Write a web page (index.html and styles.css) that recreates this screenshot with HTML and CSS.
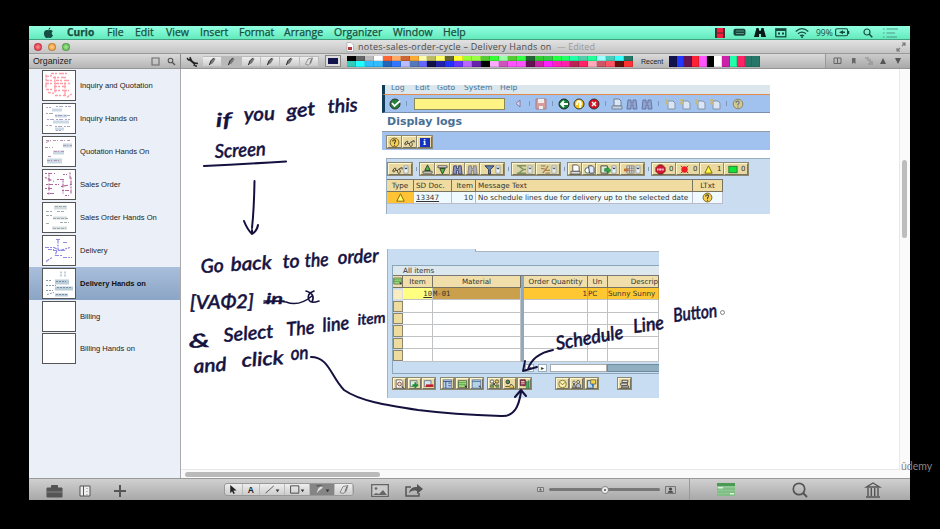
FILE: index.html
```html
<!DOCTYPE html>
<html lang="en">
<head>
<meta charset="utf-8">
<title>notes-sales-order-cycle</title>
<link rel="stylesheet" href="styles.css">
</head>
<body>
<svg class="defs" width="0" height="0">
  <symbol id="pen" viewBox="0 0 12 10"><path d="M3 9l1-4 4-4 2 1-3 5z" fill="#777"/><path d="M3 9l2-5 3-3" stroke="#222" fill="none"/></symbol>
  <symbol id="eraser" viewBox="0 0 12 10"><path d="M2 8l3-6 5-1-2 6-3 2z" fill="#ddd" stroke="#777" stroke-width=".8"/><path d="M7 7l2-5" stroke="#666"/></symbol>
  <symbol id="glasses" viewBox="0 0 12 12"><path d="M1 7c3-5 4-2 2 1-2 2-3-1-1-2M6 8c0-3 3-3 3 0s-3 3-3 0M4 7h2M8 5l3-1v2" fill="none" stroke="#333"/></symbol>
  <symbol id="help" viewBox="0 0 12 12"><circle cx="6" cy="6" r="4.8" fill="#f6d050" stroke="#755b1c"/><path d="M4 5c0-3 4-2 3 0L6 6.5v1M6 8.5v1" fill="none" stroke="#443" stroke-width="1.2"/></symbol>
  <symbol id="check" viewBox="0 0 12 12"><circle cx="6" cy="6" r="5" fill="#238138" stroke="#333"/><path d="M3 5l2.5 3L11 3" stroke="#fff" stroke-width="1.8" fill="none"/></symbol>
  <symbol id="back" viewBox="0 0 12 12"><circle cx="6" cy="6" r="5" fill="#168038" stroke="#222"/><path d="M10 6H4M6 3L3 6l3 3" stroke="#fff" stroke-width="1.8" fill="none"/></symbol>
  <symbol id="exit" viewBox="0 0 12 12"><circle cx="6" cy="6" r="5" fill="#f1c51a" stroke="#333"/><path d="M4 7c0-5 4-5 4 0M7 5v5" stroke="#fff" stroke-width="1.8" fill="none"/></symbol>
  <symbol id="cancel" viewBox="0 0 12 12"><circle cx="6" cy="6" r="5" fill="#d51320" stroke="#333"/><path d="M4 4l4 4M8 4L4 8" stroke="#fff" stroke-width="1.5"/></symbol>
  <symbol id="save" viewBox="0 0 12 12"><path d="M1 1h10v10H1z" fill="#d99a98" stroke="#a2808a"/><path d="M3 1h6v4H3zM4 8h4v3H4z" fill="#eee"/></symbol>
  <symbol id="print" viewBox="0 0 12 12"><path d="M3 1h5l2 2v5H3z" fill="#fff" stroke="#555"/><path d="M1 8h10v3H1z" fill="#ddd" stroke="#444" stroke-width=".8"/></symbol>
  <symbol id="find" viewBox="0 0 12 12"><path d="M2 2h3v3h2V2h3l1 9H7V7H5v4H1z" fill="#8790be" stroke="#353b64" stroke-width=".9"/></symbol>
  <symbol id="page" viewBox="0 0 12 12"><path d="M4 3h5l2 2v6H4z" fill="#fff" stroke="#777"/><path d="M1 2h3M1 5h3M3 1v6" stroke="#e0b72c" stroke-width="1.7"/></symbol>
  <symbol id="up" viewBox="0 0 12 12"><path d="M6 1l3 6H3z" fill="#4db84e" stroke="#263b27"/><path d="M1 8h10v2H1z" fill="#eee" stroke="#333" stroke-width=".8"/></symbol>
  <symbol id="down" viewBox="0 0 12 12"><path d="M3 5h6l-3 6z" fill="#4db84e" stroke="#263b27"/><path d="M1 2h10v2H1z" fill="#eee" stroke="#333" stroke-width=".8"/></symbol>
  <symbol id="filter" viewBox="0 0 12 12"><path d="M1 2h10L7 6v5H5V6z" fill="#6685b7" stroke="#253350"/></symbol>
  <symbol id="menu" viewBox="0 0 6 12"><path d="M.7 2h4.6v8H.7z" fill="#edf1f8" stroke="#8795a5" stroke-width=".8"/><path d="M1 4h4L3 6z" fill="#234"/></symbol>
  <symbol id="sum" viewBox="0 0 12 12"><path d="M1 2h10M1 10h10M3 2l5 4-5 4M8 6h3" stroke="#5f8148" stroke-width="1.6" fill="none"/></symbol>
  <symbol id="percent" viewBox="0 0 12 12"><path d="M1 2h5M1 5h4M6 7h5M6 10h5M9 2L3 10" stroke="#a06a30" stroke-width="1.5" fill="none"/></symbol>
  <symbol id="docs" viewBox="0 0 12 12"><circle cx="4" cy="7" r="3" fill="#fff" stroke="#367"/><path d="M5 2h4l2 2v6H6z" fill="#dfe9ff" stroke="#345"/></symbol>
  <symbol id="export" viewBox="0 0 12 12"><path d="M1 2h7v8H1z" fill="#d9edcf" stroke="#444"/><path d="M5 5h3V3l4 4-4 4V8H5z" fill="#31a445" stroke="#264" stroke-width=".6"/></symbol>
  <symbol id="config" viewBox="0 0 12 12"><path d="M1 2h7v9H1z" fill="#b9d9f4" stroke="#346"/><path d="M5 1h6v5H5z" fill="#f6d648" stroke="#665"/><path d="M6 6h3l-2 4z" fill="#2877c8"/></symbol>
  <symbol id="grid" viewBox="0 0 12 12"><path d="M3 2h8v8H3zM3 4.7h8M3 7.3h8M6 2v8M8.5 2v8" fill="#ddd" stroke="#777" stroke-width=".8"/><path d="M0 5h5v3H0z" fill="#bd7336"/></symbol>
  <symbol id="table" viewBox="0 0 12 12"><path d="M1 2h10v8H1z" fill="#bae78a" stroke="#475841"/><path d="M1 4.5h9M1 7h9" stroke="#278c32"/><path d="M8 8h3v3z" fill="#222"/></symbol>
  <symbol id="bluetable" viewBox="0 0 12 12"><path d="M1 1h10v10H1z" fill="#b9cfed" stroke="#607ba0"/><path d="M1 3h10M4 3v8M7 5h3M7 8h3" stroke="#304979"/></symbol>
  <symbol id="plaintable" viewBox="0 0 12 12"><path d="M1 1h10v10H1z" fill="#b3d3e9" stroke="#607ba0"/><path d="M1 3h10" stroke="#4e7193"/><path d="M8 8h3v3z" fill="#345"/></symbol>
  <symbol id="detail" viewBox="0 0 12 12"><path d="M2 1h6l2 2v8H2z" fill="#fff" stroke="#555"/><circle cx="6" cy="6" r="2.3" fill="#ead9c4" stroke="#883c27"/><path d="M8 8l3 3" stroke="#222"/></symbol>
  <symbol id="plus" viewBox="0 0 12 12"><path d="M1 2h8v7H1z" fill="#e2ecdb" stroke="#607080"/><path d="M7 4v7M3.500 7.500h7" stroke="#169139" stroke-width="2.2"/></symbol>
  <symbol id="minus" viewBox="0 0 12 12"><path d="M1 2h8v7H1z" fill="#d9e4ed" stroke="#607080"/><path d="M3 8h9" stroke="#c11c2c" stroke-width="3"/></symbol>
  <symbol id="flow" viewBox="0 0 12 12"><path d="M3 3l5 6M9 3L3 8" stroke="#333"/><circle cx="3" cy="3" r="2" fill="#fff" stroke="#444"/><circle cx="9" cy="3" r="2" fill="#eecf53" stroke="#444"/><path d="M1 7h4v3H1zM8 7h3v3H8z" fill="#61a84c" stroke="#444" stroke-width=".6"/></symbol>
  <symbol id="partner" viewBox="0 0 12 12"><circle cx="4" cy="3.500" r="2.200" fill="#57944a" stroke="#333"/><path d="M1 9h5l2-3 3 3v2H6" fill="#eecf53" stroke="#444"/></symbol>
  <symbol id="schedule" viewBox="0 0 12 12"><path d="M1 1h6v7H1z" fill="#ac4557" stroke="#4a1630"/><path d="M2 3h4M2 5h4M3 8v3" stroke="#edd"/><path d="M8 3h1.5v8H8zM10.2 2h1.5v9h-1.5z" fill="#3ca34a" stroke="#355" stroke-width=".4"/></symbol>
  <symbol id="clock" viewBox="0 0 12 12"><circle cx="6" cy="6" r="4.500" fill="#fff1a6" stroke="#6b6838"/><path d="M3 4l3 3 3-3" fill="none" stroke="#554"/></symbol>
  <symbol id="people" viewBox="0 0 12 12"><path d="M1 10.500L3 5l2 5.500zM5.500 10.500V7l2.500-2 3 2v3.500z" fill="#b8bfcc" stroke="#333" stroke-width=".8"/><circle cx="3" cy="4" r="1.500" fill="#fff" stroke="#333" stroke-width=".8"/><circle cx="8" cy="3.500" r="1.800" fill="#dfddd0" stroke="#333" stroke-width=".8"/></symbol>
  <symbol id="stack" viewBox="0 0 12 12"><path d="M3 1.500h7v2.500H3zM1.500 5h8v2.500h-8zM3 8.500h8v2H2z" fill="#fff" stroke="#333"/></symbol>
</svg>

<main class="window">
  <header class="menubar">
    <svg class="apple" viewBox="0 0 12 12"><path d="M6 3c-2-1-5 0-5 3.500C1 9 3 12 4.500 11.500c1-.5 2-.5 3 0C9 12 10 10 11 8.500 9 7.500 9 5 10.700 4 9.500 2.500 8 2.500 6 3zM6 2.600C6 1 7 .3 8 0c.2 1.300-.5 2.400-2 2.600z" fill="#164d45"/></svg>
    <b class="m-app">Curio</b><span class="m1">File</span><span class="m2">Edit</span><span class="m3">View</span><span class="m4">Insert</span><span class="m5">Format</span><span class="m6">Arrange</span><span class="m7">Organizer</span><span class="m8">Window</span><span>Help</span>
    <div class="status">
      <svg class="s-film" viewBox="0 0 10 10"><path d="M0 0h10v10H0z" fill="#473034"/><path d="M2 0h6v4.500H2zM2 5.500h6V10H2z" fill="#f31d3d"/></svg>
      <svg class="s-pill" viewBox="0 0 13 9"><rect x=".5" y=".8" width="12" height="7" rx="2" fill="#18453c"/><path d="M3 3h8M3 5.500h8" stroke="#6cb7a0" stroke-width=".7"/></svg>
      <svg class="s-bino" viewBox="0 0 12 11"><path d="M2.500 1h2l1 3h1l1-3h2L12 10H7V7H5v3H0z" fill="#071a17"/></svg>
      <svg class="s-card" viewBox="0 0 12 10"><rect x=".8" y=".8" width="10" height="8" fill="none" stroke="#184a40" stroke-width="1.300"/><path d="M1 2h10" stroke="#184a40" stroke-width="2"/><path d="M3 4.500h2v2H3zM7 4.500h2v2H7z" fill="#184a40"/></svg>
      <svg class="s-wifi" viewBox="0 0 14 10"><path d="M.7 3.500c4-3.600 8.600-3.600 12.600 0M3 5.800c3-2.400 5-2.400 8 0M5 7.800c1.500-1 2.500-1 4 0" fill="none" stroke="#164b42" stroke-width="1.200"/><circle cx="7" cy="9" r="1" fill="#164b42"/></svg>
      <span class="pct">99%</span>
      <svg class="s-bat" viewBox="0 0 15 9"><rect x=".6" y=".8" width="12" height="7" rx="1.500" fill="none" stroke="#164b42" stroke-width="1.100"/><path d="M13.500 3v3" stroke="#164b42" stroke-width="1.500"/><path d="M4 4.300l4-2v4zM8 3.500h2v1.600H8z" fill="#164b42"/></svg>
      <svg class="s-find" viewBox="0 0 10 10"><circle cx="4" cy="4" r="3" fill="none" stroke="#164b42" stroke-width="1.200"/><path d="M6 6l3.300 3.300" stroke="#164b42" stroke-width="1.500"/></svg>
      <svg class="s-list" viewBox="0 0 15 10"><path d="M0 1h1.500M0 5h1.500M0 9h1.500M3.500 1H15M3.500 5H12M3.500 9H14" stroke="#4d998c" stroke-width="1.200"/></svg>
    </div>
  </header>

  <div class="titlebar">
    <div class="lights"><i class="red"></i><i class="amber"></i><i class="green"></i></div>
    <div class="doc-title"><svg viewBox="0 0 8 10"><path d="M1 .5h4L7.500 3v6.500H1z" fill="#fff" stroke="#999" stroke-width=".6"/><path d="M2 5h4v3H2z" fill="#b33836"/></svg><span>notes-sales-order-cycle – Delivery Hands on</span><em>— Edited</em></div>
    <svg class="full" viewBox="0 0 10 10"><path d="M6 1h3v3M9 1L6 4M4 9H1V6M1 9l3-3" fill="none" stroke="#777" stroke-width="1.100"/></svg>
  </div>

  <div class="toolbar">
    <div class="org"><span>Organizer</span><svg viewBox="0 0 25 9"><path d="M1 1h7v7H1z" fill="none" stroke="#6b6b6b" stroke-width="1.100"/><circle cx="19.500" cy="3.500" r="2.300" fill="none" stroke="#555" stroke-width="1.100"/><path d="M21 5l3 3" stroke="#555" stroke-width="1.400"/></svg></div>
    <svg class="wrench" viewBox="0 0 12 11"><path d="M3 3l6 5" stroke="#222" stroke-width="2.200"/><path d="M1 2l1.500 2 2.500-.5L4 1M8 10l1-3 3 .5M9 10l2 0" fill="none" stroke="#222" stroke-width="1.400"/></svg>
    <div class="pens"><span><svg><use href="#pen"/></svg></span><span class="on"><svg><use href="#pen"/></svg></span><span><svg><use href="#pen"/></svg></span><span><svg><use href="#pen"/></svg></span><span><svg><use href="#pen"/></svg></span><span><svg><use href="#eraser"/></svg></span></div>
    <div class="current"><i></i></div>
    <div class="palette" id="palette"></div>
    <span class="recent-label">Recent</span>
    <div class="recent" id="recent"></div>
    <div class="shelf"><svg viewBox="0 0 74 10"><path d="M3 2h7v5.500H3zM6.500 2v5.500" fill="none" stroke="#666"/><path d="M21 2h3.500v6l-1.800-1.500L21 8z" fill="#666"/><path d="M34 2h4M36 4h4M38 6h4M37 8h5" stroke="#888"/><path d="M49 8l3-6 3 6zM64 2h6l-3 6z" fill="#555"/></svg></div>
  </div>

  <section class="body">
    <nav class="sidebar">
      <div class="row"><svg class="thumb" viewBox="0 0 32 28"><g fill="none" stroke="#ff9ba7" stroke-width="1.300" stroke-dasharray="3 1 2 2 5 1"><path d="M8 2h16M3 5l8-1M10 6h13M3 9h9M13 9h13M3 12h24M11 15h12M3 18h6M11 19h15M5 21l7 1M12 24h11M24 26l6-5"/><path d="M3 3v14M12 5v16M22 11v13"/></g></svg><span>Inquiry and Quotation</span></div>
      <div class="row"><svg class="thumb" viewBox="0 0 32 28"><path d="M9 4h10v3H9zM12 10h12v3H12zM10 16h16v3H10zM12 23h9v3h-9z" fill="#cbd9e6"/><path d="M3 3h5M13 2h15M3 9h7M12 11h15M4 15h23M3 21h6M12 22h15M13 26h5" stroke="#a09ac1" stroke-width=".9" stroke-dasharray="2 1 4 2"/></svg><span>Inquiry Hands on</span></div>
      <div class="row"><svg class="thumb" viewBox="0 0 32 28"><path d="M20 6h9v4h-9zM10 13h11v4H10zM4 21h15v5H4z" fill="#c9d8e2"/><path d="M3 3h25M3 5l5-2M2 10h8M20 8h9M11 14h11M5 19h4M4 23h14" stroke="#b893b5" stroke-dasharray="3 1 1 2"/></svg><span>Quotation Hands On</span></div>
      <div class="row"><svg class="thumb" viewBox="0 0 32 28"><path d="M2 3h10M20 4h4M27 2v6M2 7l9 4M14 9h8M3 14h13M18 16l11-2M2 18h9M19 20h8M4 23h9M22 25h4M6 4v20M20 10v13M28 7v17" stroke="#ad699e" stroke-width="1.200" stroke-dasharray="2 1 4 2" fill="none"/></svg><span>Sales Order</span></div>
      <div class="row"><svg class="thumb" viewBox="0 0 32 28"><path d="M11 2h13v4H11zM10 13h14v3H10zM9 23h15v3H9z" fill="#d5dde0"/><path d="M12 3h12M3 8h6M14 8h7M3 12h6M10 15h15M17 19h9M3 20h4M10 25h13" stroke="#a1aba9" stroke-dasharray="3 1"/></svg><span>Sales Order Hands On</span></div>
      <div class="row"><svg class="thumb" viewBox="0 0 32 28"><path d="M13 3h4M15 3v10M20 6h4M2 11h9l6 3 10-3M10 14h12M14 14l-2 5M3 25l6-4M12 19h8M20 21h9M5 13h6" stroke="#918be5" stroke-width="1.200" stroke-dasharray="4 1 2 1" fill="none"/></svg><span>Delivery</span></div>
      <div class="row selected"><svg class="thumb" viewBox="0 0 32 28"><path d="M12 10h14v5H12zM12 17h18v4H12zM12 24h13v3H12z" fill="#b9ced8"/><path d="M18 2v5M22 2v6M3 11h6M13 12h10M3 16h10M14 18h14M3 21h7M4 25l7-2M13 25h12" stroke="#6e7f9e" stroke-width=".8" stroke-dasharray="2 1"/></svg><span>Delivery Hands on</span></div>
      <div class="row"><svg class="thumb"></svg><span>Billing</span></div>
      <div class="row"><svg class="thumb"></svg><span>Billing Hands on</span></div>
    </nav>

    <div class="canvas">
      <section class="logs">
        <div class="logmenu"><span class="l1">Log</span><span class="l2">Edit</span><span class="l3">Goto</span><span class="l4">System</span><span>Help</span></div>
        <div class="logbar">
          <svg><use href="#check"/></svg><i></i><div class="command"></div><svg class="tri" viewBox="0 0 6 9"><path d="M5 1v7L1 4.500z" fill="#ddd" stroke="#87a"/></svg><i></i><svg><use href="#save"/></svg><i></i>
          <svg><use href="#back"/></svg><svg><use href="#exit"/></svg><svg><use href="#cancel"/></svg><i></i>
          <svg class="dim"><use href="#print"/></svg><svg class="dim"><use href="#find"/></svg><svg class="dim"><use href="#find"/></svg><i></i>
          <svg class="dim"><use href="#page"/></svg><svg class="dim"><use href="#page"/></svg><svg class="dim"><use href="#page"/></svg><svg class="dim"><use href="#page"/></svg><i></i><svg class="dim"><use href="#help"/></svg>
        </div>
        <h1>Display logs</h1>
        <div class="logactions"><b><svg><use href="#help"/></svg></b><b><svg><use href="#glasses"/></svg></b><b><span class="info">i</span></b></div>
        <div class="logpanel">
          <div class="gridbar">
            <b class="wide"><svg><use href="#glasses"/></svg><svg class="dd"><use href="#menu"/></svg></b><i></i>
            <b><svg><use href="#up"/></svg></b><b><svg><use href="#down"/></svg></b><b><svg><use href="#find"/></svg></b><b><svg class="dim"><use href="#find"/></svg></b><b class="wide"><svg><use href="#filter"/></svg><svg class="dd"><use href="#menu"/></svg></b><i></i>
            <b class="wide faded"><svg><use href="#sum"/></svg><svg class="dd"><use href="#menu"/></svg></b><b class="wide faded"><svg><use href="#percent"/></svg><svg class="dd"><use href="#menu"/></svg></b><i></i>
            <b class="slim"><svg><use href="#print"/></svg></b><b class="slim"><svg><use href="#docs"/></svg></b><b class="wide"><svg><use href="#export"/></svg><svg class="dd"><use href="#menu"/></svg></b><b class="wide"><svg><use href="#grid"/></svg><svg class="dd"><use href="#menu"/></svg></b><i></i>
            <b class="count"><svg viewBox="0 0 12 12"><path d="M4 1h4l3 3v4l-3 3H4L1 8V4z" fill="#d21632" stroke="#722"/><path d="M2.500 6h7" stroke="#fff" stroke-width="2" stroke-dasharray="1 .6"/></svg>0</b><b class="count"><svg viewBox="0 0 12 12"><path d="M2 2l8 8M10 2l-8 8" stroke="#444"/><circle cx="6" cy="6" r="3.500" fill="#ed1c25"/></svg>0</b><b class="count"><svg viewBox="0 0 12 12"><path d="M6 2l4 8H2z" fill="#ff3" stroke="#775f16"/></svg>1</b><b class="count"><svg viewBox="0 0 12 12"><rect x="2" y="2.500" width="9" height="7" fill="#10e439" stroke="#28752b"/></svg>0</b>
          </div>
          <div class="logtable">
            <span class="h c">Type</span><span class="h">SD Doc.</span><span class="h r">Item</span><span class="h">Message Text</span><span class="h c">LTxt</span>
            <span class="warn c"><svg viewBox="0 0 12 12"><path d="M6 2l4 8H2z" fill="#ff6" stroke="#885a13"/></svg></span><span><u>13347</u></span><span class="r">10</span><span>No schedule lines due for delivery up to the selected date</span><span class="c"><svg><use href="#help"/></svg></span>
          </div>
        </div>
      </section>

      <section class="items">
        <div class="tabnotch"></div>
        <div class="itemsbox">
          <div class="caption">All items</div>
          <div class="itemgrid">
            <span class="h ico"><svg><use href="#table"/></svg></span><span class="h">Item</span><span class="h">Material</span><i class="split"></i><span class="h">Order Quantity</span><span class="h">Un</span><span class="h desc">Descrip</span>
            <span class="sel first"></span><span class="no"><u>10</u></span><span class="mat">M-01</span><i class="split"></i><span class="gold r">1</span><span class="gold">PC</span><span class="gold">Sunny Sunny</span>
            <span class="sel"></span><span></span><span></span><i class="split"></i><span></span><span></span><span></span>
            <span class="sel"></span><span></span><span></span><i class="split"></i><span></span><span></span><span></span>
            <span class="sel"></span><span></span><span></span><i class="split"></i><span></span><span></span><span></span>
            <span class="sel"></span><span></span><span></span><i class="split"></i><span></span><span></span><span></span>
            <span class="sel"></span><span></span><span></span><i class="split"></i><span></span><span></span><span></span>
          </div>
          <div class="hscroll"><i class="arrow">◂</i><i class="arrow">▸</i><i class="white"></i><i class="slate"></i></div>
        </div>
        <div class="itemtools">
          <div><b><svg><use href="#detail"/></svg></b><b><svg><use href="#plus"/></svg></b><b><svg><use href="#minus"/></svg></b></div>
          <div><b><svg><use href="#bluetable"/></svg></b><b><svg><use href="#table"/></svg></b><b><svg><use href="#plaintable"/></svg></b></div>
          <div><b><svg><use href="#flow"/></svg></b><b><svg><use href="#partner"/></svg></b><b><svg><use href="#schedule"/></svg></b></div>
          <div><b><svg><use href="#clock"/></svg></b><b><svg><use href="#people"/></svg></b><b><svg><use href="#config"/></svg></b></div>
          <div><b><svg><use href="#stack"/></svg></b></div>
        </div>
      </section>

      <svg class="ink" viewBox="181 69 720 400">
        <g class="hand">
          <text lengthAdjust="spacingAndGlyphs" transform="translate(216 127) rotate(-3)" textLength="16">if</text>
          <text lengthAdjust="spacingAndGlyphs" transform="translate(244 121) rotate(-2)" textLength="31">you</text>
          <text lengthAdjust="spacingAndGlyphs" transform="translate(287 118) rotate(-6)" textLength="29">get</text>
          <text lengthAdjust="spacingAndGlyphs" transform="translate(328 113) rotate(-3)" textLength="30">this</text>
          <text lengthAdjust="spacingAndGlyphs" transform="translate(215 158) rotate(-3)" textLength="51">Screen</text>
          <text lengthAdjust="spacingAndGlyphs" transform="translate(201 273) rotate(-3)" textLength="23">Go</text>
          <text lengthAdjust="spacingAndGlyphs" transform="translate(231 271) rotate(-3)" textLength="41">back</text>
          <text lengthAdjust="spacingAndGlyphs" transform="translate(283 268) rotate(-3)" textLength="17">to</text>
          <text lengthAdjust="spacingAndGlyphs" transform="translate(305 267) rotate(-3)" textLength="24">the</text>
          <text lengthAdjust="spacingAndGlyphs" transform="translate(338 264) rotate(-3)" textLength="41">order</text>
          <text lengthAdjust="spacingAndGlyphs" transform="translate(190 309) rotate(-1)" textLength="64">[VAΦ2]</text>
          <text lengthAdjust="spacingAndGlyphs" class="small" transform="translate(266 304)" textLength="17">in</text>
          <text lengthAdjust="spacingAndGlyphs" transform="translate(189 348) rotate(-3)" textLength="21">&amp;</text>
          <text lengthAdjust="spacingAndGlyphs" transform="translate(224 342) rotate(-5)" textLength="50">Select</text>
          <text lengthAdjust="spacingAndGlyphs" transform="translate(287 336) rotate(-5)" textLength="28">The</text>
          <text lengthAdjust="spacingAndGlyphs" transform="translate(323 332) rotate(-6)" textLength="27">line</text>
          <text lengthAdjust="spacingAndGlyphs" class="small" transform="translate(358 325) rotate(-5)" textLength="28">item</text>
          <text lengthAdjust="spacingAndGlyphs" transform="translate(194 373) rotate(-4)" textLength="33">and</text>
          <text lengthAdjust="spacingAndGlyphs" transform="translate(242 367) rotate(-4)" textLength="42">click</text>
          <text lengthAdjust="spacingAndGlyphs" transform="translate(291 360) rotate(-4)" textLength="18">on</text>
          <text lengthAdjust="spacingAndGlyphs" transform="translate(557 350) rotate(-10)" textLength="68">Schedule</text>
          <text lengthAdjust="spacingAndGlyphs" transform="translate(634 333) rotate(-8)" textLength="31">Line</text>
          <text lengthAdjust="spacingAndGlyphs" transform="translate(674 322) rotate(-7)" textLength="44">Button</text>
        </g>
        <g class="stroke">
          <path d="M204 166Q244 164 286 161.500" stroke-width="2.200"/>
          <path d="M254.500 181Q254 210 252 228M244 221Q247 229 252 234Q257 231 258 225M252 230v4" stroke-width="2"/>
          <path d="M264 303Q276 300 286 302Q299 307 312 296M314 291q-8 3-5 9q2 4 10 1M306 291q10 3 6 11M264 301h20" stroke-width="1.600"/>
          <path d="M311 357C329 357 331 377 344 390C360 401 385 405 418 410C450 414 472 415 501 416C515 417 519 405 521 392M515 397L521 390L526 396" stroke-width="2"/>
          <path d="M553 350Q533 354 528 369M525 361L523 371L537 367" stroke-width="1.900"/>
        </g>
        <circle cx="722.500" cy="312.500" r="2" fill="#fff" stroke="#555" stroke-width=".7"/>
      </svg>
      <div class="vtrack"><i></i></div>
      <div class="htrack"><i></i></div>
    </div>
  </section>

  <footer class="bottombar">
    <div class="left-tools"><svg viewBox="0 0 90 16"><path d="M4 5h15v9H4zM8.500 5V2.500h6V5" fill="#555" stroke="#555"/><path d="M4 9h15" stroke="#888"/><path d="M37 3h10v10H37z" fill="#eee" stroke="#555"/><path d="M40.500 3v10" stroke="#555"/><path d="M44 5v1M44 8v1M44 11v1" stroke="#888"/><path d="M77 2v12M71 8h12" stroke="#555" stroke-width="2"/></svg></div>
    <div class="draw">
      <span><svg viewBox="0 0 12 12"><path d="M3 1v9l2-2 1.500 3 1.500-1-1.500-3H10z" fill="#222"/></svg></span><span><b>A</b></span><span class="d3"><svg viewBox="0 0 20 12"><path d="M3 10l9-8" stroke="#555"/><path d="M14 6h4l-2 3z" fill="#333"/></svg></span><span class="d3"><svg viewBox="0 0 20 12"><path d="M3 2h9v8H3z" fill="none" stroke="#444"/><path d="M14 6h4l-2 3z" fill="#333"/></svg></span><span class="d3 active"><svg viewBox="0 0 20 12"><path d="M4 10l2-5 3-3 2 2-4 3z" fill="#ddd"/><path d="M4 2h6" stroke="#444"/><path d="M14 6h4l-2 3z" fill="#333"/></svg></span><span><svg><use href="#eraser"/></svg></span>
    </div>
    <svg class="picture" viewBox="0 0 18 13"><path d="M.7.700h16.600v11.600H.7z" fill="#ccc" stroke="#666" stroke-width="1.300"/><circle cx="5" cy="4.500" r="1.300" fill="#666"/><path d="M2 11l3-2 3 1 4-4 4 5z" fill="#666"/></svg>
    <svg class="share" viewBox="0 0 19 14"><path d="M6 4H1v9h13v-3" fill="none" stroke="#555" stroke-width="1.500"/><path d="M4 10c1-5 4-6 8-6V1l6 5-6 5V8c-4-1-6 0-8 2z" fill="#555"/></svg>
    <div class="zoomer"><svg class="zs" viewBox="0 0 7 5"><path d="M.5.500h6v4h-6z" fill="#ccc" stroke="#777"/><path d="M2 3.500h3L3.500 1z" fill="#555"/></svg><div class="range"><i></i></div><svg class="zl" viewBox="0 0 11 8"><path d="M.5.500h10v7H.5z" fill="#bbb" stroke="#777"/><circle cx="5.500" cy="3" r="1.600" fill="#444"/><path d="M2.500 6.800h6q-.5-2-3-2t-3 2z" fill="#444"/></svg></div>
    <div class="places">
      <svg viewBox="0 0 18 16"><path d="M0 1h18v13H0z" fill="#8fc893"/><path d="M0 1h18v3H0z" fill="#4b9955"/><path d="M0 7h18M0 10h18M0 13h18" stroke="#6dae73" stroke-width=".8"/><path d="M1 5h5v1.500H1zM13 11h4v1.500h-4z" fill="#dcf0de"/></svg>
      <svg viewBox="0 0 18 16"><circle cx="8" cy="7" r="5.700" fill="none" stroke="#555" stroke-width="1.700"/><path d="M12 11l4 4" stroke="#555" stroke-width="2"/></svg>
      <svg viewBox="0 0 18 16"><path d="M9 1l6.500 4h-13zM4 6v8M7.300 6v8M10.700 6v8M14 6v8M2 15h14" fill="none" stroke="#555" stroke-width="1.400"/></svg>
    </div>
  </footer>
</main>
<div class="watermark">ûdemy</div>
<script src="script.js"></script>
</body>
</html>
```
FILE: styles.css
```css
* { box-sizing: border-box; }
body { margin: 0; padding: 26px 0 0 29px; width: 940px; height: 529px; overflow: hidden; background: #000; font-family: "Liberation Sans", Arial, sans-serif; color: #222; }
svg { display: block; flex: none; }
i, em { font-style: normal; }
.defs { position: absolute; }
.window { width: 881px; height: 474px; display: flex; flex-direction: column; background: #fff; }
.menubar { height: 14px; display: flex; align-items: center; padding-left: 14px; background: linear-gradient(#91ffe0, #63eabc); border-bottom: 1px solid #42a181; font: 10.5px/13px "Open Sans", sans-serif; color: #184d40; -webkit-text-stroke: .25px #184d40; white-space: nowrap; }
.menubar > span, .menubar > b { flex: none; }
.apple { width: 11px; height: 12px; margin-right: 13px; }
.m-app { width: 40px; font-size: 10.2px; } .m1 { width: 28px; } .m2 { width: 31px; } .m3 { width: 34px; } .m4 { width: 39px; } .m5 { width: 45px; } .m6 { width: 50px; } .m7 { width: 59px; } .m8 { width: 50px; }
.status { margin-left: auto; width: 195px; display: flex; align-items: center; }
.s-film { width: 10px; height: 10px; margin-right: 8px; }
.s-pill { width: 13px; height: 9px; margin-right: 8px; }
.s-bino { width: 12px; height: 11px; margin-right: 9px; }
.s-card { width: 12px; height: 10px; margin-right: 8px; }
.s-wifi { width: 14px; height: 10px; margin-right: 7px; }
.pct { width: 19px; font-size: 8.5px; -webkit-text-stroke: 0; }
.s-bat { width: 15px; height: 9px; margin-right: 13px; }
.s-find { width: 10px; height: 10px; margin-right: 10px; }
.s-list { width: 15px; height: 10px; }
.titlebar { height: 14px; display: flex; align-items: center; background: linear-gradient(#e2e2e2, #c4c4c4); border-bottom: 1px solid #999; }
.lights { display: flex; gap: 6px; padding-left: 5px; width: 316px; }
.lights i { width: 8px; height: 8px; border-radius: 50%; border: 1px solid #0003; }
.red { background: radial-gradient(#ff8b95, #e52d40); } .amber { background: radial-gradient(#ffd18a, #ec932d); } .green { background: radial-gradient(#a9e69a, #52b94a); }
.doc-title { display: flex; align-items: center; font: 9px/12px "Open Sans", sans-serif; color: #4a4a4a; white-space: nowrap; width: 256px; }
.doc-title svg { width: 8px; height: 10px; margin: 0 4px 0 1px; }
.doc-title span { width: 199px; letter-spacing: .26px; }
.doc-title em { color: #999; }
.full { width: 10px; height: 10px; margin-left: auto; margin-right: 4px; }
.toolbar { height: 15px; display: flex; align-items: center; background: linear-gradient(#dadada, #b5b5b5); border-bottom: 1px solid #969696; }
.org { width: 152px; height: 14px; display: flex; align-items: center; justify-content: space-between; padding: 0 4px; border-right: 1px solid #8c8c8c; font-size: 8.8px; }
.org svg { width: 25px; height: 9px; }
.wrench { width: 12px; height: 11px; margin: 0 5px; }
.pens { width: 116px; height: 11px; margin-right: 6px; display: flex; }
.pens span { flex: 1; display: flex; justify-content: center; align-items: center; background: linear-gradient(#eee, #ccc); border: 1px solid #bbb; border-left-width: 0; }
.pens .on { background: #b9b9b9; }
.pens svg { width: 12px; height: 9px; }
.current { width: 16px; height: 12px; padding: 2px; background: #ddd; border: 1px solid #888; margin-right: 6px; }
.current i { display: block; height: 100%; background: #12124c; }
.palette { width: 286px; height: 11px; display: grid; grid-template-columns: repeat(32, 1fr); grid-template-rows: 1fr 1fr; }
.recent-label { width: 36px; padding-left: 8px; font-size: 7px; }
.recent { width: 91px; height: 11px; display: flex; }
.recent i { flex: 1; }
.palette i, .recent i { border: solid #0002; border-width: 0 .5px .5px 0; }
.shelf { margin-left: auto; width: 85px; height: 14px; padding: 2px 4px 0 5px; border-left: 1px solid #999; background: #0001; }
.shelf svg { width: 74px; height: 10px; }
.body { height: 409px; display: flex; flex: none; }
.sidebar { width: 152px; background: #ebeff7; border-right: 1px solid #aaa; overflow: hidden; }
.row { height: 32.95px; display: flex; align-items: center; gap: 4px; padding-left: 13px; font-size: 7.6px; white-space: nowrap; color: #222; }
.thumb { width: 34px; height: 31px; background: #fff; border: 1.5px solid #555; }
.selected { background: linear-gradient(#a9bedb, #8ba5c6); color: #111; font-weight: bold; font-size: 7.55px; }
.canvas { position: relative; width: 729px; overflow: hidden; background: #fff; }
.logs { position: absolute; left: 201px; top: 16px; width: 388px; height: 129px; background: #fff; font-family: "DejaVu Sans", sans-serif; overflow: hidden; color: #35332d; }
.logmenu { height: 9px; display: flex; padding-left: 6px; overflow: hidden; background: #dbe7ec; color: #47759a; font-size: 7.6px; line-height: 5px; border-left: 3px solid #123c56; }
.l1 { width: 24px; } .l2 { width: 22px; } .l3 { width: 27px; } .l4 { width: 36px; }
.logbar { height: 19px; display: flex; align-items: center; gap: 3px; padding-left: 4px; background: #a1c2ee; border-top: 1.5px solid #e48b4a; border-left: 3px solid #123c56; border-bottom: 1px solid #7890ad; }
.logbar svg { width: 12px; height: 12px; }
.logbar i { width: 1px; height: 5px; margin: 0 2px; background: #7897bb; }
.command { width: 91px; height: 12px; margin: 0 7px 0 2px; background: #fff386; border: 1px solid #8c895b; }
.logbar .tri { width: 6px; height: 9px; margin-right: 3px; }
.dim { opacity: .6; }
.logs h1 { margin: 0; height: 18px; padding-left: 5px; font: bold 11px/18px "DejaVu Sans", sans-serif; color: #477194; }
.logactions { height: 19px; padding: 4px 0 0 5px; display: flex; background: #a1c2ee; border-top: 1px solid #929ba9; }
.logs b, .items b { display: flex; align-items: center; justify-content: center; width: 15px; height: 12px; background: #e9d9a1; border: 1px solid #777363; border-left-color: #fff7cf; border-top-color: #fff7cf; outline: .5px solid #8d8871; font-weight: normal; }
.logs b svg { width: 11px; height: 11px; }
.info { width: 10px; height: 9px; background: #1832bd; color: #fff; font: bold 8px/9px "DejaVu Serif", serif; text-align: center; }
.logpanel { margin: 8px 0 0 4px; height: 56px; background: #cadcef; border: solid #98adbd; border-width: 1px 0 0 1px; }
.gridbar { height: 20px; display: flex; align-items: center; padding-left: 1px; }
.gridbar i { width: 1px; height: 4px; margin: 0 3.5px; background: #8799ad; }
.logs .gridbar .wide { width: 24px; }
.logs .gridbar .slim { width: 14px; }
.logs .gridbar .faded svg { opacity: .75; }
.logs .gridbar .faded { background: #ddd5a8; }
.logs .gridbar .dd { width: 6px; }
.logs .gridbar .count { width: 24px; justify-content: space-around; font-size: 7px; }
.logtable { width: 336px; display: grid; grid-template-columns: 27px 38px 24px 217px 30px; grid-template-rows: 12px 12px; font-size: 7.25px; line-height: 11px; border-top: 1px solid #777; white-space: nowrap; }
.logtable span { padding: 0 2px; background: #eefaff; border-right: 1px solid #bbc; border-bottom: 1px solid #bbc; }
.logtable .h { background: #f0dca0; border-color: #77735f; }
.logtable .warn { background: #ffc333; }
.logtable .c { display: flex; justify-content: center; align-items: center; }
.logtable .r { text-align: right; }
.logtable svg { width: 11px; height: 11px; }
.items { position: absolute; left: 206px; top: 180px; width: 272px; height: 149px; background: #c9ddf2; overflow: hidden; border-left: 1px solid #9ab6cf; font-family: "DejaVu Sans", sans-serif; color: #35332d; }
.tabnotch { height: 3px; margin-left: 87px; background: #fff; border-left: 1px solid #aaa; border-bottom: 1px solid #abb5bf; }
.itemsbox { margin: 13px 0 0 4px; height: 109px; border: solid #8aa6ba; border-width: 1px 0 1px 1px; }
.caption { height: 9px; padding-left: 10px; background: #dce8ed; font-size: 7.2px; line-height: 9px; }
.itemgrid { display: grid; grid-template-columns: 10px 30px 88px 3px 64px 20px 51px; grid-template-rows: 12px repeat(6, 12.3px); font-size: 7.2px; line-height: 11px; white-space: nowrap; border-top: 1px solid #777; }
.itemgrid span { background: #fff; border: solid #bfc3c6; border-width: 0 1px 1px 0; overflow: hidden; }
.itemgrid .h { background: #f0dfab; border-color: #777363; text-align: center; }
.itemgrid .h.desc { text-align: right; }
.itemgrid .ico svg { width: 9px; height: 10px; }
.itemgrid .sel { background: #eedb9e; border: 1px solid #8e846b; margin: .5px 0; }
.itemgrid .first { background: #faeec0; border-color: #ddd; }
.itemgrid .split { background: #8faabd; }
.itemgrid .no { background: #ffff80; text-align: right; font-family: "DejaVu Sans Mono", monospace; }
.itemgrid .mat { background: #cba04c; font-family: "DejaVu Sans Mono", monospace; }
.itemgrid .gold { background: #ffc833; border-right-color: #d5a637; }
.itemgrid .r { text-align: right; }
.hscroll { height: 11px; padding: 1px 0 0 132px; display: flex; gap: 4px; align-items: center; }
.hscroll .arrow { width: 9px; height: 8px; background: #fff; border: 1px solid #9aaebe; font-size: 6px; line-height: 6px; text-align: center; }
.hscroll .white { width: 57px; height: 8px; margin-left: -1px; background: #fff; border: 1px solid #aaa; }
.hscroll .slate { flex: 1; height: 8px; margin-left: -4px; background: #8faebf; border: 1px solid #728b9a; border-right: 0; }
.itemtools { display: flex; padding: 4px 0 0 5px; }
.itemtools div { display: flex; gap: 1.600px; }
.itemtools div:nth-child(2) { margin-left: 6px; }
.itemtools div:nth-child(3) { margin-left: 5px; }
.itemtools div:nth-child(4) { margin-left: 25px; }
.itemtools div:nth-child(5) { margin-left: 20px; }
.items .itemtools b { width: 13px; height: 11px; }
.itemtools svg { width: 11px; height: 10px; }
.ink { position: absolute; left: 0; top: 0; width: 720px; height: 400px; }
.hand text { font: italic 500 19px Lato, "Liberation Sans", sans-serif; fill: #14113f; stroke: #14113f; stroke-width: .5px; }
.hand .small { font-size: 15px; }
.stroke { fill: none; stroke: #14113f; stroke-linecap: round; stroke-linejoin: round; }
.vtrack { position: absolute; right: 0; top: 0; width: 11px; height: 409px; background: #fafafa; border-left: 1px solid #e8e8e8; padding: 91px 3px 0 2px; }
.vtrack i { display: block; width: 5px; height: 78px; background: #bdbdbd; border-radius: 3px; }
.htrack { position: absolute; left: 0; bottom: 0; width: 729px; height: 9px; background: #fafafa; border-top: 1px solid #e8e8e8; padding: 2px 0 0 4px; }
.htrack i { display: block; width: 195px; height: 5px; background: #bababa; border-radius: 3px; }
.bottombar { height: 22px; display: flex; align-items: center; background: linear-gradient(#d0d0d0, #a8a8a8); border-top: 1px solid #999; flex: none; }
.left-tools { width: 195px; padding-left: 14px; }
.left-tools svg { width: 90px; height: 16px; margin-top: 2px; }
.draw { width: 130px; height: 13px; display: flex; background: linear-gradient(#eee, #ccc); border: 1px solid #999; border-radius: 3px; overflow: hidden; }
.draw span { flex: 1; display: flex; align-items: center; justify-content: center; border-right: 1px solid #bbb; font-size: 8.5px; }
.draw .d3 { flex: 1.45; }
.draw svg { width: 12px; height: 11px; }
.draw .d3 svg { width: 20px; }
.draw .active { background: #858585; }
.picture { width: 18px; height: 13px; margin: 2px 0 0 17px; }
.share { width: 19px; height: 14px; margin-left: 16px; }
.zoomer { display: flex; align-items: center; width: 140px; margin-left: 113px; gap: 5px; }
.zs { width: 7px; height: 5px; } .zl { width: 11px; height: 8px; }
.range { width: 111px; height: 3px; background: #777; border-radius: 2px; display: flex; align-items: center; justify-content: center; }
.range i { width: 8px; height: 8px; border-radius: 50%; background: radial-gradient(#777 20%, #eee 25%); border: 1px solid #888; }
.places { margin-left: auto; width: 221px; height: 21px; display: flex; align-items: center; justify-content: space-between; padding: 1px 28px 0 27px; border-left: 1px solid #999; }
.places svg { width: 18px; height: 16px; }
.watermark { position: absolute; left: 901px; top: 460px; font: 10.500px/12px Lato, sans-serif; color: #888; }
```
FILE: script.js
```js
const palette = `#000 #666 #bbb #fff #ff6633 #ffaa66 #cc6633 #ffaa33 #ffffaa #bbbb66 #ffff66 #666633 #ffff33 #99ff33 #99ff44 #55cc33 #33ff33 #99ffaa #55cc33 #33ff44 #226633 #33cc33 #33cc44 #22ff44 #22ff66 #22ffaa #55ccaa #22ff99 #99ffff #44ccbb #33ffff #227766
#33ccbb #22ffff #33bbff #33bbff #2266bb #3377ff #bbbbff #5577bb #6666ff #111144 #2222aa #2233ff #6633ff #bb66ff #6622aa #000 #ffaaff #cc55bb #ff55ff #ff55ff #661155 #cc22aa #ff22ff #ff22bb #ff22aa #bb2255 #ff2266 #ffaabb #cc5566 #ff5566 #661111 #ff3333`.split(/\s+/);
const recent = "#12124c #2038ff #641454 #ff2233 #ff55ff #000 #fff #cc22aa #22ffaa #ff2266 #277768 #277768".split(" ");

function fill(id, colors) {
  const box = document.getElementById(id);
  for (const color of colors) {
    const swatch = document.createElement("i");
    swatch.style.background = color;
    box.append(swatch);
  }
}
fill("palette", palette);
fill("recent", recent);
```
